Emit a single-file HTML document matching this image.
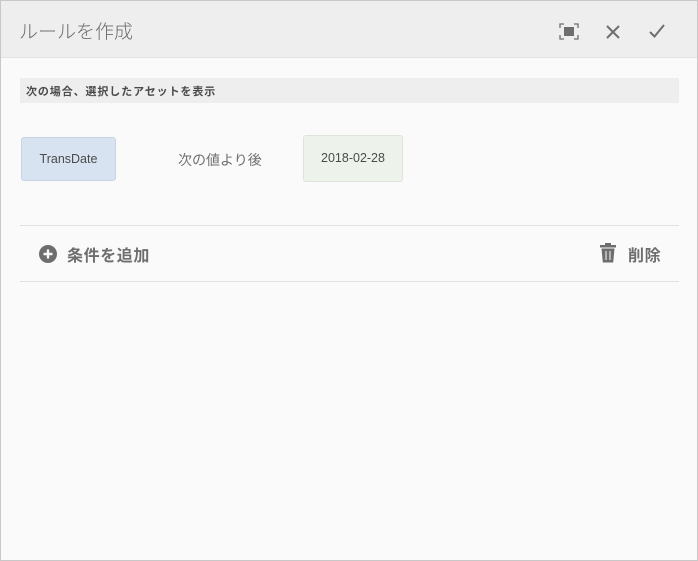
<!DOCTYPE html>
<html><head><meta charset="utf-8"><style>
*{margin:0;padding:0;box-sizing:border-box}
body{width:698px;height:561px;background:#fafafa;font-family:"Liberation Sans","Noto Sans CJK JP",sans-serif;position:relative;overflow:hidden}
.frame{position:absolute;left:0;top:0;width:698px;height:561px;border:1px solid #c8c8c8;pointer-events:none}
.hdr{position:absolute;left:0;top:0;width:698px;height:58px;background:#eeeeee;border-bottom:1px solid #e2e2e2}
.title{position:absolute;left:19px;top:17px;font-size:19px;color:#6e6e6e;font-weight:300}
.bar{position:absolute;left:20px;top:78px;width:659px;height:25px;background:#eeeeee;font-size:11px;color:#4b4b4b;padding:5px 6px;font-weight:bold;letter-spacing:0.9px}
.box{position:absolute;border-radius:3px;font-size:12.5px;color:#4b4b4b;text-align:center}
.hr{position:absolute;left:20px;width:659px;height:1px;background:#e0e0e0}
.lbl{position:absolute;font-size:16px;font-weight:bold;color:#6e6e6e;letter-spacing:0.6px}
</style></head><body>
<div class="hdr">
<div class="title">ルールを作成</div>
<svg style="position:absolute;left:559px;top:23px" width="20" height="17" viewBox="0 0 20 17"><path d="M1 5V1h4M15 1h4v4M19 12v4h-4M5 16H1v-4" fill="none" stroke="#6e6e6e" stroke-width="1.3"/><rect x="5" y="4" width="10" height="9" fill="#6e6e6e"/></svg>
<svg style="position:absolute;left:606px;top:25px" width="14" height="14"><path d="M1 1L13 13M13 1L1 13" stroke="#6e6e6e" stroke-width="2"/></svg>
<svg style="position:absolute;left:649px;top:24px" width="16" height="14"><path d="M1 8L5.5 12.5L15 1" fill="none" stroke="#6e6e6e" stroke-width="2"/></svg>
</div>
<div class="bar">次の場合、選択したアセットを表示</div>
<div class="box" style="left:21px;top:137px;width:95px;height:44px;background:#d8e3f1;border:1px solid #c8d4e4;line-height:42px">TransDate</div>
<div style="position:absolute;left:178px;top:150px;font-size:14px;color:#707070">次の値より後</div>
<div class="box" style="left:303px;top:135px;width:100px;height:47px;background:#edf3eb;border:1px solid #dde5db;line-height:44px">2018-02-28</div>
<div class="hr" style="top:225px"></div>
<svg style="position:absolute;left:39px;top:245px" width="18" height="18"><circle cx="9" cy="9" r="9" fill="#6e6e6e"/><path d="M9 4.5v9M4.5 9h9" stroke="#fafafa" stroke-width="2.4"/></svg>
<div class="lbl" style="left:67px;top:242px">条件を追加</div>
<svg style="position:absolute;left:599px;top:243px" width="18" height="20"><rect x="1" y="2" width="16" height="2.5" fill="#6e6e6e"/><rect x="6" y="0" width="6" height="3" fill="#6e6e6e"/><path d="M2.5 5.5h13l-1.3 14H3.8z" fill="#6e6e6e"/><path d="M7 8v9M11 8v9" stroke="#fafafa" stroke-width="1"/></svg>
<div class="lbl" style="left:628px;top:242px">削除</div>
<div class="hr" style="top:281px"></div>
<div class="frame"></div>
</body></html>
